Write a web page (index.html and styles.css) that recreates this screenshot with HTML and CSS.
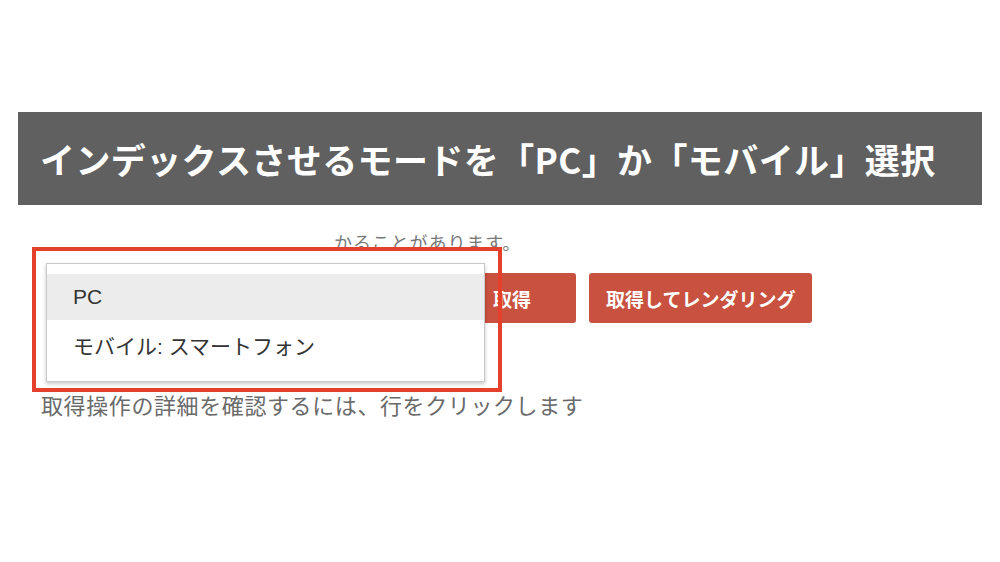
FILE: index.html
```html
<!DOCTYPE html>
<html lang="ja">
<head>
<meta charset="utf-8">
<title>インデックスさせるモード</title>
<link rel="stylesheet" href="styles.css">
</head>
<body>
<div class="page">
  <header class="banner">
    <h1 class="banner-title">インデックスさせるモードを「PC」か「モバイル」選択</h1>
  </header>
  <main class="content">
    <p class="note">かることがあります。</p>
    <div class="actions">
      <button class="btn">取得</button>
      <button class="btn">取得してレンダリング</button>
    </div>
    <p class="hint">取得操作の詳細を確認するには、行をクリックします</p>
  </main>
  <ul class="dropdown">
    <li class="option option-active">PC</li>
    <li class="option">モバイル: スマートフォン</li>
  </ul>
  <div class="highlight"></div>
</div>
</body>
</html>
```

FILE: styles.css
```css
html, body {
  margin: 0;
  padding: 0;
  background: #ffffff;
}

body {
  font-family: "Liberation Sans", "Noto Sans CJK JP", sans-serif;
}

.page {
  position: relative;
  width: 1000px;
  height: 562px;
  overflow: hidden;
}

.banner {
  margin: 112px 18px 0;
  height: 93px;
  background: #606060;
  display: flex;
  align-items: center;
  padding-left: 22px;
}

.banner-title {
  margin: 0;
  color: #ffffff;
  font-family: "Noto Sans CJK JP", sans-serif;
  font-weight: 700;
  font-size: 35px;
  line-height: 1;
  letter-spacing: 0.4px;
}

.content {
  display: flex;
  flex-direction: column;
}

.note {
  margin: 27px 0 0 334px;
  font-family: "Noto Sans CJK JP", sans-serif;
  font-size: 18px;
  line-height: 20px;
  color: #777777;
  letter-spacing: 0.9px;
}

.actions {
  display: flex;
  gap: 13px;
  margin: 21px 0 0 448px;
}

.btn {
  height: 50px;
  padding: 0 17px;
  border: none;
  border-radius: 3px;
  background: #c9513f;
  color: #ffffff;
  font-family: "Noto Sans CJK JP", sans-serif;
  font-weight: 700;
  font-size: 19px;
  line-height: 1;
}

.btn:first-child {
  padding: 0 45px;
}

.hint {
  margin: 66px 0 0 41px;
  font-family: "Noto Sans CJK JP", sans-serif;
  font-size: 22px;
  line-height: 30px;
  color: #6a6a6a;
  letter-spacing: 0.6px;
}

.dropdown {
  position: absolute;
  left: 46px;
  top: 263px;
  width: 437px;
  margin: 0;
  padding: 10px 0 11px;
  list-style: none;
  background: #ffffff;
  border: 1px solid #c9c9c9;
  box-shadow: 0 2px 4px rgba(0, 0, 0, 0.22);
}

.option {
  height: 50px;
  display: flex;
  align-items: center;
  padding-left: 26px;
  font-size: 21px;
  color: #333333;
}

.option-active {
  height: 46px;
  background: #ececec;
}

.highlight {
  position: absolute;
  left: 32px;
  top: 247px;
  width: 462px;
  height: 137px;
  border: 4px solid #e5402c;
}
```
